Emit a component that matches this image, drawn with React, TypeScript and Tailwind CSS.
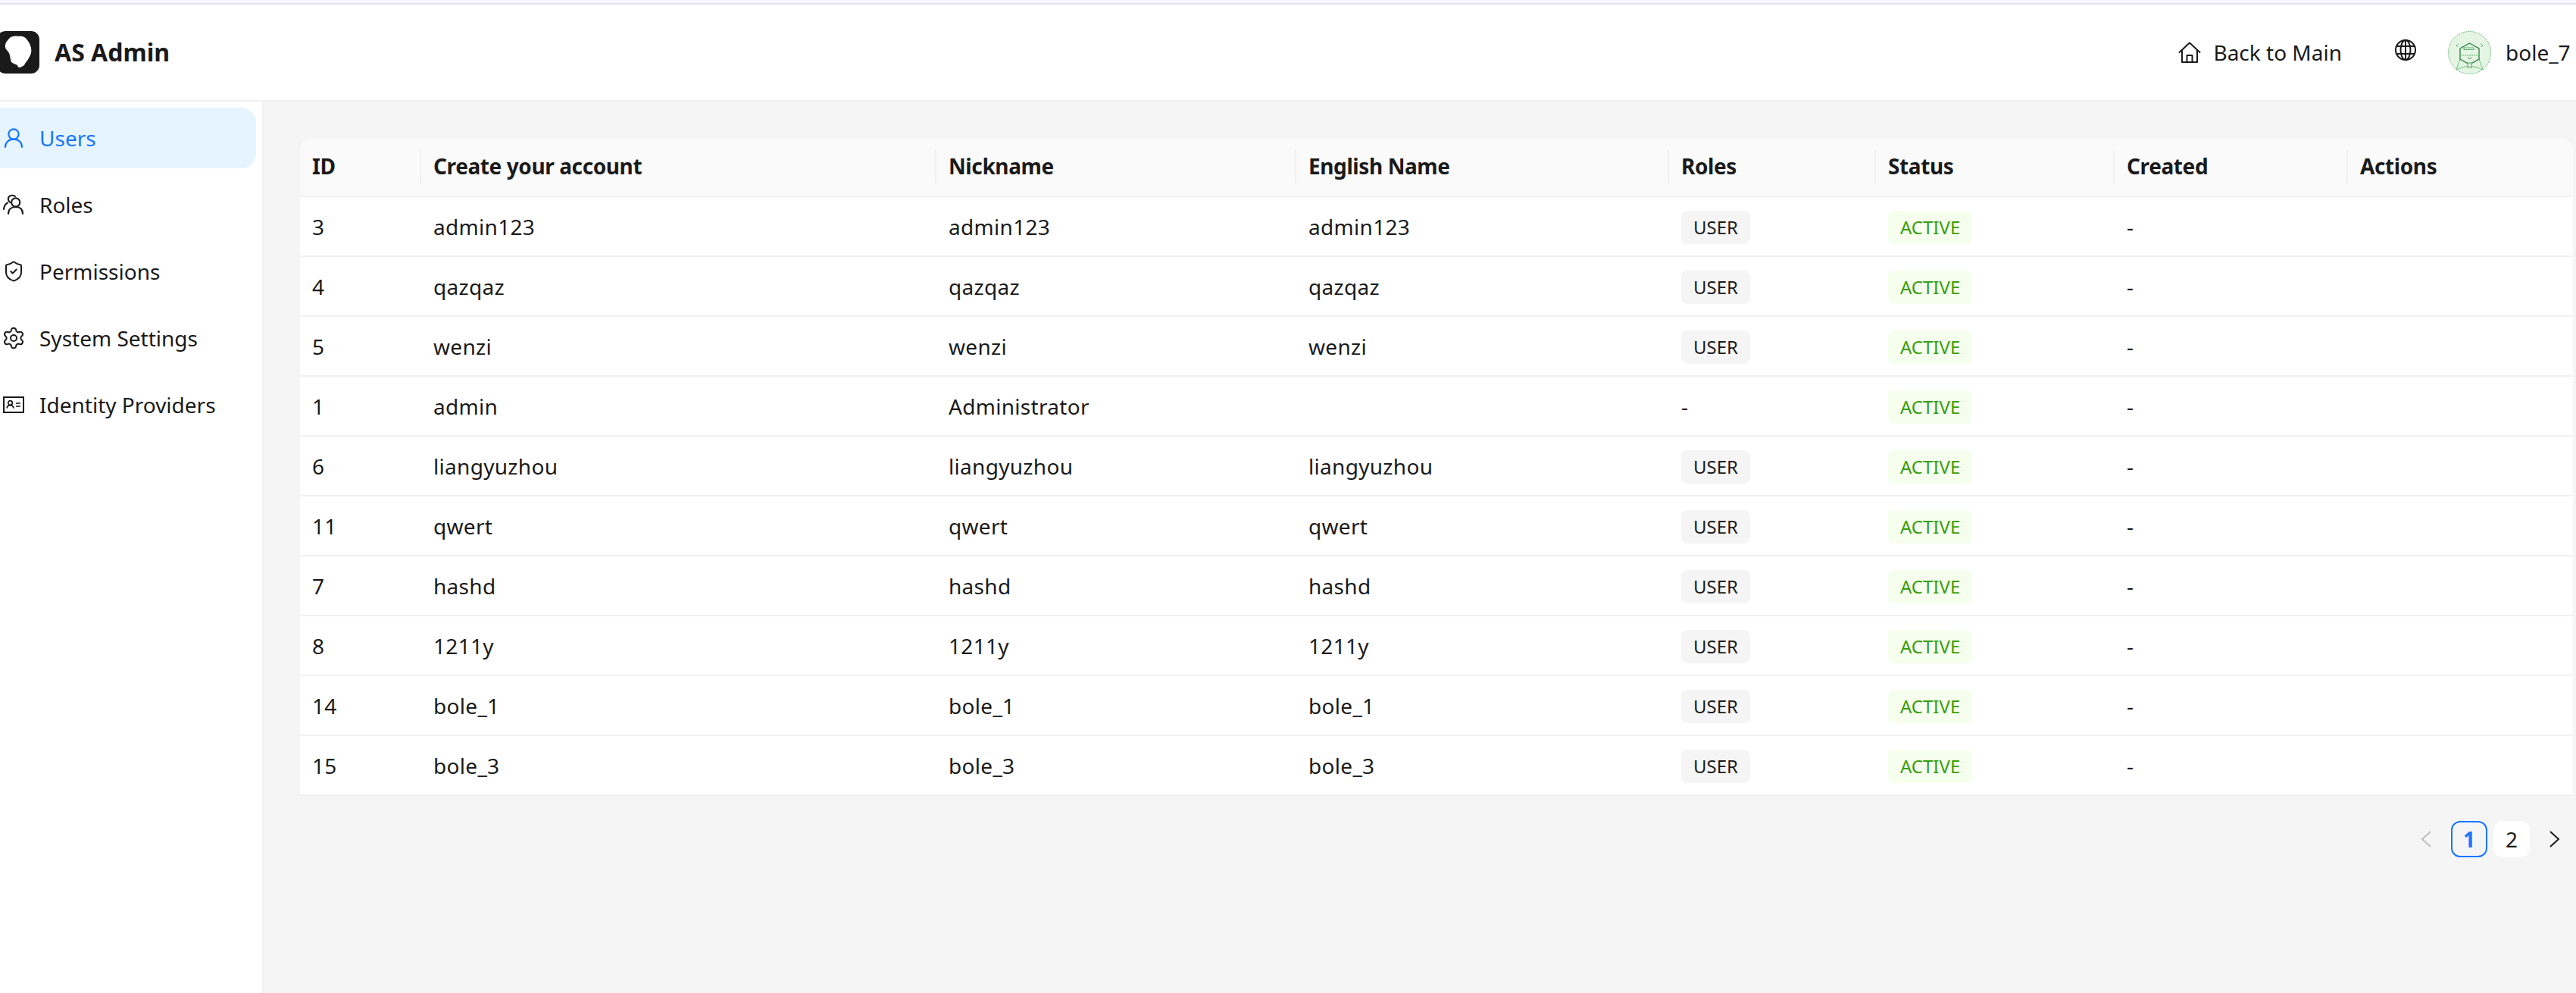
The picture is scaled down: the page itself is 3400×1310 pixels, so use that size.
import { ShieldCheck, Settings } from "lucide-react"

const font = "font-['Noto_Sans',sans-serif]"

type Row = { id: string; name: string; nick: string; en: string; role: boolean }

const rows: Row[] = [
  { id: "3", name: "admin123", nick: "admin123", en: "admin123", role: true },
  { id: "4", name: "qazqaz", nick: "qazqaz", en: "qazqaz", role: true },
  { id: "5", name: "wenzi", nick: "wenzi", en: "wenzi", role: true },
  { id: "1", name: "admin", nick: "Administrator", en: "", role: false },
  { id: "6", name: "liangyuzhou", nick: "liangyuzhou", en: "liangyuzhou", role: true },
  { id: "11", name: "qwert", nick: "qwert", en: "qwert", role: true },
  { id: "7", name: "hashd", nick: "hashd", en: "hashd", role: true },
  { id: "8", name: "1211y", nick: "1211y", en: "1211y", role: true },
  { id: "14", name: "bole_1", nick: "bole_1", en: "bole_1", role: true },
  { id: "15", name: "bole_3", nick: "bole_3", en: "bole_3", role: true },
]

const headers = [
  { label: "ID", width: "w-[160px]" },
  { label: "Create your account", width: "w-[680px]" },
  { label: "Nickname", width: "w-[475px]" },
  { label: "English Name", width: "w-[492px]" },
  { label: "Roles", width: "w-[273px]" },
  { label: "Status", width: "w-[315px]" },
  { label: "Created", width: "w-[308px]" },
  { label: "Actions", width: "" },
]

function UserIcon() {
  return (
    <svg viewBox="0 0 26 28" className="w-[26px] h-[28px]" fill="none" stroke="currentColor" strokeWidth="2.2">
      <circle cx="13" cy="9" r="6.6" />
      <path d="M2 26c0-6 4.6-10.4 11-10.4S24 20 24 26" strokeLinecap="round" />
    </svg>
  )
}

function RolesIcon() {
  return (
    <svg viewBox="0 0 30 28" className="w-[30px] h-[28px]" fill="none" stroke="currentColor" strokeWidth="2.1" strokeLinecap="round">
      <path d="M17 3C14 1 9 1.500 8 5c-.5 3 1 5 2.500 6" />
      <path d="M7 11.500C4 13 2.500 16 2 20" />
      <circle cx="17.700" cy="11" r="5.600" />
      <path d="M8 26c0-6 4-9 9.700-9S27 20 27 26" />
    </svg>
  )
}

function CardIcon() {
  return (
    <svg viewBox="0 0 28 22" className="w-[28px] h-[22px]" fill="none" stroke="currentColor" strokeWidth="2">
      <rect x="1" y="1" width="26" height="20" />
      <circle cx="9.500" cy="8.500" r="2.800" strokeWidth="1.700" />
      <path d="M5 15.500c.5-2.500 2.200-3.800 4.500-3.800s4 1.300 4.500 3.800" strokeWidth="1.700" />
      <path d="M17 9h6M17 13h6" strokeWidth="1.700" />
    </svg>
  )
}

function HomeIcon() {
  return (
    <svg viewBox="0 0 30 28" className="w-[30px] h-[28px]" fill="none" stroke="currentColor" strokeWidth="2" strokeLinejoin="round" strokeLinecap="round">
      <path d="M1.500 14L15 1.500 28.500 14" />
      <path d="M5 11v16h20V11" />
      <path d="M11.500 27v-9h7v9" />
    </svg>
  )
}

function GlobeIcon() {
  return (
    <svg viewBox="0 0 28 28" className="w-[28px] h-[28px]" fill="none" stroke="currentColor" strokeWidth="2">
      <circle cx="14" cy="14" r="13" />
      <ellipse cx="14" cy="14" rx="6.500" ry="13" />
      <path d="M14 1v26M2.500 9h23M2.500 19h23" />
    </svg>
  )
}

function Avatar() {
  return (
    <svg viewBox="0 0 57 57" className="w-[57px] h-[57px] shrink-0">
      <circle cx="28.500" cy="28.500" r="28" fill="#e4f5e4" stroke="#5cb270" strokeWidth="0.900" strokeDasharray="2 1" />
      <path d="M28.500 16l12.500 7v14l-12.500 7-12.500-7V23z" fill="none" stroke="#2e7d3c" strokeWidth="1.300" />
      <path d="M16 32h25" stroke="#4caf60" strokeWidth="0.900" strokeDasharray="2 1" fill="none" />
      <rect x="21" y="22" width="13" height="2.500" fill="none" stroke="#4caf60" strokeWidth="0.900" />
      <path d="M26 35l2.500 1.500 2.500-1.500" fill="none" stroke="#2e7d3c" strokeWidth="1" />
      <path d="M14 17l-3 2 2 2M43 17l3 2-2 2" fill="none" stroke="#4caf60" strokeWidth="0.900" />
      <path d="M16 37l-5 14M41 37l5 14M12 51c10-6 23-6 33 0" fill="none" stroke="#4caf60" strokeWidth="0.800" />
      <rect x="26" y="42" width="5.500" height="6" fill="#d4ecd6" stroke="#4caf60" strokeWidth="1" />
    </svg>
  )
}

function Logo() {
  return (
    <svg viewBox="0 0 56 56" className="w-[56px] h-[56px] -ml-[4px] shrink-0">
      <rect width="56" height="56" rx="11" fill="#1a1a1a" />
      <path
        d="M27 7c4-.5 8 0 10 1.500 3 2.500 6 7 7 10.500 1.500 3.500 1.500 7 1 10-1 3.500-3 6.500-5 10-1.500 1.500-3 3.500-4 6-2 1.500-4.500 3-7 3-1 0-1.500-2-2-3-3-1.500-6.500-2.500-8-4-1.500-3.500-1.500-8-3-12-1.500-2.500-4-4.500-5-7-.5-2 0-4 .5-6 1.500-3 4-6 6.500-8 3-1.500 6-1.500 9-1.500z"
        fill="#ffffff"
      />
    </svg>
  )
}

const nav = [
  { label: "Users", icon: <UserIcon /> },
  { label: "Roles", icon: <RolesIcon /> },
  { label: "Permissions", icon: <ShieldCheck size={30} strokeWidth={1.6} /> },
  { label: "System Settings", icon: <Settings size={32} strokeWidth={1.5} /> },
  { label: "Identity Providers", icon: <CardIcon /> },
]

export default function App() {
  return (
    <div className={`w-[3400px] h-[1310px] overflow-hidden flex flex-col bg-[#f5f5f5] text-[28px] text-[#1a1a1a] ${font}`}>
      <div className="h-[6px] shrink-0 bg-[#f7f5ff] border-b-2 border-[#e4e2f2]" />

      {/* Header */}
      <header className="h-[128px] shrink-0 bg-white border-b-2 border-[#f0f0f0] flex items-center">
        <Logo />
        <span className="ml-[20px] text-[32px] font-bold">AS Admin</span>
        <div className="ml-auto flex items-center">
          <HomeIcon />
          <span className="ml-[16px]">Back to Main</span>
          <span className="ml-[70px] -mt-[6px]"><GlobeIcon /></span>
          <span className="ml-[42px]"><Avatar /></span>
          <span className="ml-[19px] w-[93px] overflow-hidden whitespace-nowrap">bole_7</span>
        </div>
      </header>

      <div className="flex-1 flex min-h-0">
        {/* Sider */}
        <aside className="w-[348px] shrink-0 bg-white border-r-2 border-[#f0f0f0] pt-[8px] pr-[8px] flex flex-col gap-[8px]">
          {nav.map((item, i) => (
            <div
              key={item.label}
              className={`h-[80px] rounded-r-[20px] flex items-center ${i === 0 ? "bg-[#e6f4ff] text-[#1677ff]" : ""}`}
            >
              <span className="w-[36px] flex justify-center shrink-0">{item.icon}</span>
              <span className="ml-[16px] whitespace-nowrap">{item.label}</span>
            </div>
          ))}
        </aside>

        {/* Content */}
        <main className="flex-1 min-w-0 pt-[48px] pl-[48px] pr-[4px]">
          <div className="rounded-t-[16px] overflow-hidden bg-white">
            <table className="w-full table-fixed border-collapse">
              <thead>
                <tr className="h-[77px] bg-[#fafafa] border-b-2 border-[#f0f0f0]">
                  {headers.map((h, i) => (
                    <th key={h.label} className={`${h.width} relative text-left font-bold tracking-[-0.4px] pl-[16px] pb-[2px]`}>
                      {h.label}
                      {i < headers.length - 1 && (
                        <span className="absolute right-0 top-[16px] h-[44px] w-[2px] bg-[#f0f0f0]" />
                      )}
                    </th>
                  ))}
                </tr>
              </thead>
              <tbody className="tracking-[0.3px]">
                {rows.map((r) => (
                  <tr key={r.id} className="h-[79px] border-b-2 border-[#f0f0f0]">
                    <td className="pl-[16px] pt-[1px]">{r.id}</td>
                    <td className="pl-[16px] pt-[1px]">{r.name}</td>
                    <td className="pl-[16px] pt-[1px]">{r.nick}</td>
                    <td className="pl-[16px] pt-[1px]">{r.en}</td>
                    <td className="pl-[16px] pt-[1px]">
                      {r.role ? (
                        <span className="inline-flex items-center h-[44px] px-[16px] rounded-[8px] bg-[#f5f5f5] text-[24px] tracking-normal">USER</span>
                      ) : (
                        "-"
                      )}
                    </td>
                    <td className="pl-[16px] pt-[1px]">
                      <span className="inline-flex items-center h-[44px] px-[16px] rounded-[8px] bg-[#f6ffed] text-[#389e0d] text-[24px] tracking-normal">ACTIVE</span>
                    </td>
                    <td className="pl-[16px] pt-[1px]">-</td>
                    <td />
                  </tr>
                ))}
              </tbody>
            </table>
          </div>

          {/* Pagination */}
          <div className="mt-[33px] flex items-center justify-end pr-[17px]">
            <svg viewBox="0 0 14 22" className="w-[14px] h-[22px] text-[#bdbdbd] mr-[26px]" fill="none" stroke="currentColor" strokeWidth="2">
              <path d="M13 1L2 11l11 10" />
            </svg>
            <div className="w-[48px] h-[48px] rounded-[12px] border-2 border-[#1677ff] text-[#1677ff] font-bold flex items-center justify-center">1</div>
            <div className="ml-[8px] w-[48px] h-[48px] rounded-[12px] bg-white flex items-center justify-center">2</div>
            <svg viewBox="0 0 14 22" className="w-[14px] h-[22px] ml-[26px]" fill="none" stroke="currentColor" strokeWidth="2">
              <path d="M1 1l11 10L1 21" />
            </svg>
          </div>
        </main>
      </div>
    </div>
  )
}
